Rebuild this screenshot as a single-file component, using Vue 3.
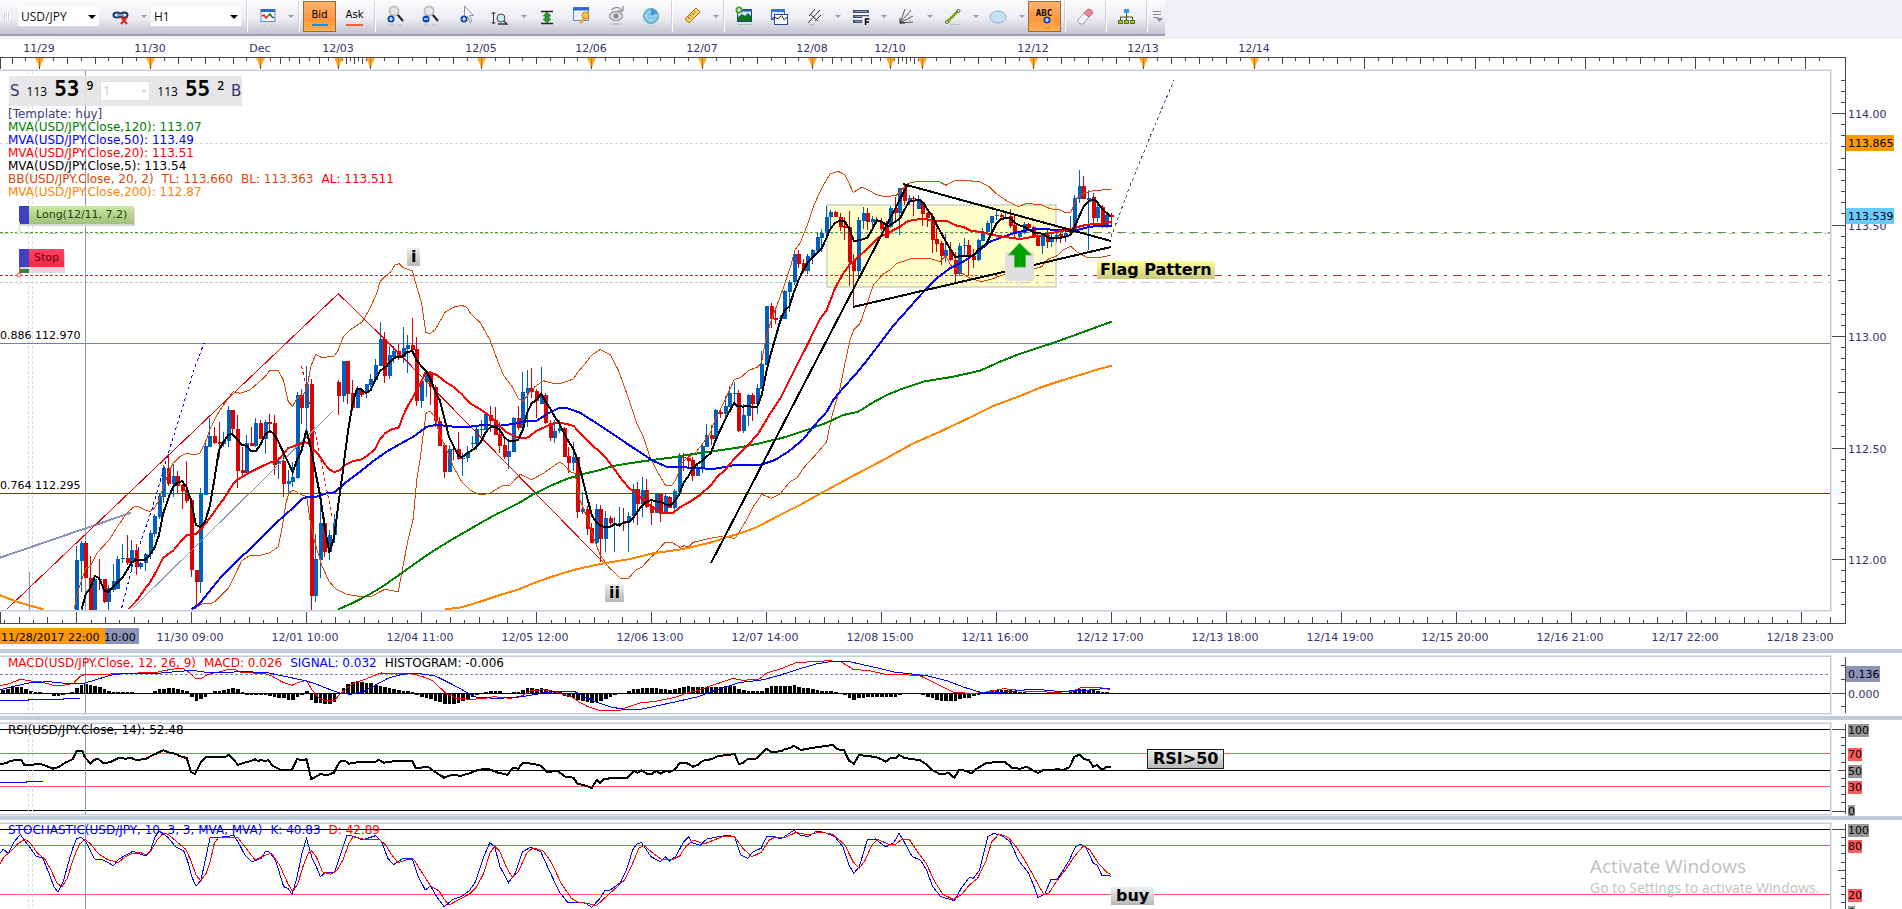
<template>
  <div class="station">
    <header class="topbar">
      <div class="toolbar">
        <span class="grip"></span>
        <label class="picker symbol">
          <select v-model="symbol" aria-label="Symbol">
            <option>USD/JPY</option>
            <option>EUR/USD</option>
          </select>
          <span class="arrow"></span>
        </label>
        <button class="tool" aria-label="Link charts"><svg class="icon" v-html="icons.link"></svg></button>
        <button class="caret" aria-label="Link options"></button>
        <label class="picker period">
          <select v-model="period" aria-label="Period">
            <option>H1</option>
            <option>H4</option>
          </select>
          <span class="arrow"></span>
        </label>
        <span class="sep"></span>
        <button class="tool" aria-label="Indicators"><svg class="icon" v-html="icons.chart"></svg></button>
        <button class="caret" aria-label="Indicator options"></button>
        <span class="sep"></span>
        <button class="tool side" :class="{ active: side === 'Bid' }" @click="side = 'Bid'"><span class="word bid">Bid</span></button>
        <button class="tool side" :class="{ active: side === 'Ask' }" @click="side = 'Ask'"><span class="word ask">Ask</span></button>
        <span class="sep"></span>
        <template v-for="t in tools" :key="t.name">
          <button class="tool" :class="{ active: t.active }" :aria-label="t.name"><svg class="icon" v-html="icons[t.icon]"></svg></button>
          <button v-if="t.menu" class="caret" :aria-label="t.name + ' options'"></button>
          <span v-if="t.sep" class="sep"></span>
        </template>
        <button class="more" aria-label="More tools">
          <svg width="10" height="12" viewBox="0 0 10 12">
            <path d="M0 .5h8M0 3.5h8M0 6.5h5" stroke="#8a8aa0" />
            <path d="M3 7h7l-3.500 4z" fill="#8a8aa0" />
          </svg>
        </button>
      </div>
    </header>

    <main class="main-pane">
      <svg class="top-axis" height="31">
        <line class="axis" x1="0" y1="18.500" x2="100%" y2="18.500" />
        <path class="axis" :d="topTicks" />
        <g v-for="d in dates" :key="d.x">
          <path v-if="d.mark" :d="`M${d.x - 4} 19h9l-2 4-2 6h-1l-2-6z`" fill="#ffa928" />
          <line class="axis" :x1="d.x + 0.5" y1="27" :x2="d.x + 0.5" y2="31" />
          <line v-if="d.mark" :x1="d.x + 0.5" y1="19" :x2="d.x + 0.5" y2="27" stroke="#d08010" />
          <line v-else class="axis" :x1="d.x + 0.5" y1="18" :x2="d.x + 0.5" y2="27" />
          <text class="axis-label" :x="d.x" y="13" text-anchor="middle">{{ d.label }}</text>
        </g>
      </svg>

      <div class="plot">
        <svg class="canvas" height="539">
          <rect x="827" y="134" width="229" height="82" fill="#ffffcc" stroke="#b8b8b8" />
          <g class="crisp thin">
            <path d="M28.500 0V539M32.500 0V539" stroke="#dcdcdc" stroke-dasharray="3 2" />
            <path d="M29.500 501V539" stroke="#8c94b8" />
            <line x1="0" y1="72.500" x2="100%" y2="72.500" stroke="#d8d8d8" stroke-dasharray="3 2" />
            <line x1="0" y1="162.500" x2="100%" y2="162.500" stroke="#c8c8c8" stroke-dasharray="9 6 3 6" />
            <line x1="0" y1="161.500" x2="1020" y2="161.500" stroke="#5f9a35" stroke-dasharray="3 2" />
            <line x1="1021" y1="161.500" x2="100%" y2="161.500" stroke="#5f9a35" stroke-dasharray="9 6 3 6" />
            <line x1="0" y1="204.500" x2="1020" y2="204.500" stroke="#b83030" stroke-dasharray="3 2" />
            <line x1="1021" y1="204.500" x2="100%" y2="204.500" stroke="#b83030" stroke-dasharray="9 6 3 6" />
            <line x1="0" y1="211.500" x2="1020" y2="211.500" stroke="#c4c4c4" stroke-dasharray="3 2" />
            <line x1="1021" y1="211.500" x2="100%" y2="211.500" stroke="#c4c4c4" stroke-dasharray="9 6 3 6" />
            <line x1="0" y1="272.500" x2="100%" y2="272.500" stroke="#7878c8" />
            <line x1="0" y1="422.500" x2="100%" y2="422.500" stroke="#f00000" />
            <path d="M85.500 0V539" stroke="#8c94b8" />
          </g>

          <g class="crisp thin">
            <path :d="wicks.up" stroke="#0060c0" />
            <path :d="wicks.down" stroke="#dc0000" />
          </g>
          <g class="crisp">
            <path :d="bodies.up" fill="#0060c0" />
            <path :d="bodies.down" fill="#dc0000" />
          </g>

          <g class="crisp curve">
            <polyline v-for="(c, i) in mainCurves" :key="i" :points="c.points" :stroke="c.color" :stroke-width="c.width" :stroke-dasharray="c.dash" />
          </g>

          <text class="level" x="0" y="268">0.886 112.970</text>
          <text class="level" x="0" y="418">0.764 112.295</text>

          <rect x="1005" y="181" width="29" height="29" rx="2" fill="#e0e0e0" />
          <path d="M1019.500 172l12 12h-6v12h-11v-12h-6z" fill="#00a000" stroke="#50b850" />
          <circle cx="1019" cy="212" r="1.500" fill="#fff" stroke="#ddd" />
        </svg>

        <div class="quote">
          <button class="deal" @click="order = 'sell'">
            <span class="deal-side">S</span><span class="small">113</span><span class="big">53</span><span class="pip">9</span>
          </button>
          <label class="lots">
            <select v-model="lots" aria-label="Lots"><option>1</option><option>2</option></select>
            <span class="arrow"></span>
          </label>
          <button class="deal" @click="order = 'buy'">
            <span class="small">113</span><span class="big">55</span><span class="pip">2</span><span class="deal-side">B</span>
          </button>
        </div>

        <ul class="legend main-legend">
          <li v-for="(row, i) in legend" :key="i">
            <span v-for="part in row" :key="part.text" :class="part.tone">{{ part.text }}</span>
          </li>
        </ul>

        <div class="position long"><i></i><span>Long(12/11, 7.2)</span></div>
        <div class="position stop-shadow"><i></i></div>
        <div class="position stop"><i></i><span>Stop</span></div>
        <svg class="pins" width="10" height="64">
          <path d="M5.500 0V9" stroke="#c4e49c" />
          <circle cx="5" cy="10" r="2" fill="#fff" stroke="#c4e49c" />
          <path d="M5.500 46V50" stroke="#ff4058" />
          <circle cx="5" cy="53" r="2" fill="#fff" stroke="#ff4058" />
          <circle cx="5" cy="60" r="2" fill="#fff" stroke="#e0e0e0" />
        </svg>

        <span class="note wave-one">i</span>
        <span class="note wave-two">ii</span>
        <span class="note flag">Flag Pattern</span>
      </div>

      <svg class="bottom-axis" height="38">
        <line class="axis" x1="0" y1="12.500" x2="100%" y2="12.500" />
        <path class="axis" :d="bottomTicks" />
        <text v-for="t in times" :key="t.x" class="axis-label" :x="t.x" y="30" text-anchor="middle">{{ t.label }}</text>
        <rect x="0" y="17" width="105" height="16" fill="#ff9900" />
        <rect x="105" y="17" width="34" height="16" fill="#8c94b8" />
        <text class="level" x="1" y="30">11/28/2017 22:00</text>
        <text class="level" x="104" y="30">10:00</text>
      </svg>

      <svg class="scale" width="71" height="610">
        <path class="axis" d="M0 18.500H14.500V584.500H0" />
        <path class="axis" :d="priceTicks" />
        <text v-for="p in prices" :key="p.y" class="axis-label" x="17" :y="p.y + 4">{{ p.label }}</text>
        <rect x="15" y="96" width="48" height="16" fill="#ff9900" />
        <text class="level" x="17" y="108">113.865</text>
        <rect x="15" y="169" width="48" height="16" fill="#66ccff" />
        <text class="level" x="17" y="181">113.539</text>
      </svg>
    </main>

    <section class="sub-pane macd">
      <div class="plot">
        <svg class="canvas" height="56">
          <g class="crisp thin">
            <line x1="0" y1="17.500" x2="100%" y2="17.500" stroke="#7c86b0" stroke-dasharray="3 2" />
            <path :d="histogram" fill="#000" />
            <line x1="0" y1="36.500" x2="100%" y2="36.500" stroke="#000" />
            <path d="M28.500 0V56M32.500 0V56" stroke="#dcdcdc" stroke-dasharray="3 2" />
            <path d="M0 43.500H28V42.500H63V41.500H80" fill="none" stroke="#0000ff" />
            <path d="M85.500 0V56" stroke="#8c94b8" />
          </g>
          <g class="crisp curve">
            <polyline :points="macd.line" stroke="#ff0000" />
            <polyline :points="macd.signal" stroke="#0000ff" />
          </g>
        </svg>
        <p class="legend">
          <span class="red">MACD(USD/JPY.Close, 12, 26, 9)</span><span class="red">MACD: 0.026</span>
          <span class="blue">SIGNAL: 0.032</span><span class="black">HISTOGRAM: -0.006</span>
        </p>
      </div>
      <svg class="scale" width="71" height="63">
        <path class="axis" d="M14.500 4V60M10 12.500H14M10 26.500H14M0 40.500H14M10 53.500H14" />
        <rect x="15" y="13" width="34" height="16" fill="#8c94b8" />
        <text class="level" x="17" y="25">0.136</text>
        <text class="axis-label" x="17" y="45">0.000</text>
      </svg>
    </section>

    <section class="sub-pane rsi">
      <div class="plot">
        <svg class="canvas" height="90">
          <g class="crisp thin">
            <line v-for="l in rsiLevels" :key="l.value" x1="0" :y1="l.y - 3.5" x2="100%" :y2="l.y - 3.5" :stroke="l.line" />
            <path d="M28.500 0V90M32.500 0V90" stroke="#dcdcdc" stroke-dasharray="3 2" />
            <path d="M0 58.500H26V57.500H43" fill="none" stroke="#0000ff" />
            <path d="M85.500 0V90" stroke="#8c94b8" />
          </g>
          <polyline class="crisp curve" :points="rsi" stroke="#000" stroke-width="2" />
        </svg>
        <p class="legend"><span class="black">RSI(USD/JPY.Close, 14): 52.48</span></p>
        <span class="note rsi-note">RSI&gt;50</span>
      </div>
      <svg class="scale" width="71" height="96">
        <path class="axis" :d="levelTicks(9)" />
        <g v-for="l in rsiLevels" :key="l.value">
          <rect x="17" :y="l.y - 5" :width="7 * l.value.length" height="13" :fill="l.box" />
          <text class="level" x="17" :y="l.y + 5">{{ l.value }}</text>
        </g>
      </svg>
    </section>

    <section class="sub-pane stochastic">
      <div class="plot">
        <svg class="canvas" height="90">
          <g class="crisp thin">
            <line v-for="l in stochLevels" :key="l.value" x1="0" :y1="l.y - 3.5" x2="100%" :y2="l.y - 3.5" :stroke="l.line" />
            <path d="M28.500 0V90M32.500 0V90" stroke="#dcdcdc" stroke-dasharray="3 2" />
            <path d="M85.500 0V90" stroke="#8c94b8" />
          </g>
          <g class="crisp curve">
            <polyline :points="stoch.k" stroke="#0000ff" />
            <polyline :points="stoch.d" stroke="#ff0000" />
          </g>
        </svg>
        <p class="legend">
          <span class="blue">STOCHASTIC(USD/JPY, 10, 3, 3, MVA, MVA)</span><span class="blue">K: 40.83</span><span class="red">D: 42.89</span>
        </p>
        <span class="note buy-note">buy</span>
      </div>
      <svg class="scale" width="71" height="96">
        <path class="axis" :d="levelTicks(9)" />
        <g v-for="l in stochLevels" :key="l.value">
          <rect x="17" :y="l.y - 5" :width="7 * l.value.length" height="13" :fill="l.box" />
          <text class="level" x="17" :y="l.y + 5">{{ l.value }}</text>
        </g>
      </svg>
    </section>

    <aside class="watermark">
      <strong>Activate Windows</strong>
      <span>Go to Settings to activate Windows.</span>
    </aside>
  </div>
</template>

<script setup>
import { ref } from 'vue'

const symbol = ref('USD/JPY')
const period = ref('H1')
const side = ref('Bid')
const lots = ref('1')
const order = ref('')

const plus = (x, y) => `<circle cx="${x}" cy="${y}" r="3.500" fill="#0a48b0"/><path d="M${x - 2} ${y}h4M${x} ${y - 2}v4" stroke="#fff" stroke-width="1.200"/>`
const lens = '<path d="M14 13l6 7" stroke="#222" stroke-width="2"/><circle cx="11" cy="10" r="4.500" fill="#e8e8e8" stroke="#c0c0c0" stroke-width="2"/>'

const icons = {
  link: '<g fill="none" stroke="#1c3a68" stroke-width="2"><ellipse cx="9" cy="14" rx="3.500" ry="2.500"/><ellipse cx="16" cy="14" rx="3.500" ry="2.500"/><path d="M9 14h7" stroke="#7aa0d0"/></g><path d="M13 16l6 7M19 16l-6 7" stroke="#e82010" stroke-width="2"/>',
  chart: '<rect x="6" y="8.500" width="14" height="12" fill="#fff" stroke="#5a86cc"/><path d="M6 9.500h14" stroke="#2c68d0" stroke-width="3"/><path d="M7 15l2-1 2 3 2-2" fill="none" stroke="#e02020" stroke-width="1.500"/><path d="M13 15l2-2 2 3 2 1" fill="none" stroke="#107020" stroke-width="1.500"/><path d="M7 24h3M15 24h3" stroke="#e8b8b8"/>',
  zoomIn: lens + plus(8, 18) + '<path d="M6 24h5M14 24h5" stroke="#b8b8cc"/>',
  zoomOut: lens + '<circle cx="8" cy="18" r="3.500" fill="#0a48b0"/><path d="M6 18h4" stroke="#fff" stroke-width="1.200"/><path d="M6 24h5M14 24h5" stroke="#b8b8cc"/>',
  pointer: '<path d="M11.500 5v13l3-2.500 2.500 6 2-1-2.500-6h4z" fill="#f4f4f4" stroke="#909098"/>' + plus(11, 18),
  zoomAxis: '<path d="M5.500 11v12M3.500 13l2-2 2 2M3.500 21l2 2 2-2" fill="none" stroke="#333"/><circle cx="13" cy="17" r="4" fill="#c8f0f8" stroke="#444"/><path d="M16 20l3 3h-9" fill="none" stroke="#333" stroke-width="1.300"/>',
  fit: '<path d="M7 10.500h12M7 22.500h12" stroke="#222" stroke-width="1.500"/><path d="M13 11l4 4h-2v3h2l-4 4-4-4h2v-3H9z" fill="#20a020" stroke="#105010" stroke-width=".500"/>',
  windowKey: '<rect x="4.500" y="6.500" width="15" height="13" fill="#e8f2fc" stroke="#5a86cc"/><path d="M4 8h16" stroke="#2c68d0" stroke-width="3"/><path d="M14 17l-4 4 2 2 5-5" fill="#e8a820"/><circle cx="16.500" cy="14.500" r="3.500" fill="#f8c040" stroke="#c88818"/>',
  eye: '<ellipse cx="12" cy="15" rx="6.500" ry="4.500" fill="#e0e0e4" stroke="#a0a0a8" stroke-width="1.500"/><circle cx="12" cy="15" r="2.500" fill="#888890"/><path d="M7 9q6-5 11 0M19 5v5h-5" fill="none" stroke="#707078"/><path d="M7 23h10" stroke="#c4c4d0" stroke-width="2"/>',
  radar: '<circle cx="12" cy="15" r="7.500" fill="#7cc0e4" stroke="#58a0c8"/><circle cx="12" cy="15" r="4.500" fill="none" stroke="#b8e0f4"/><path d="M12 15V8a7 7 0 0 1 6.500 4z" fill="#4898d0"/><path d="M5 15h14M12 15v7" stroke="#a8d8f0"/><path d="M8 25h8" stroke="#b8cce0"/>',
  ruler: '<path d="M5 18L16 7l4 4L9 22z" fill="#f4cc68" stroke="#a87418"/><path d="M8 16l2 2M10 14l1.500 1.500M12 12l2 2M14 10l1.500 1.500" stroke="#805010"/>',
  picture: '<rect x="5.500" y="8.500" width="14" height="12" fill="#c8e4f8" stroke="#184878"/><path d="M6 20v-4l4-3 3 2 3-3 3 3v5z" fill="#107818"/><path d="M5 9.500h15" stroke="#2058a8" stroke-width="2"/><circle cx="7" cy="9" r="3.500" fill="#48a030"/><path d="M5 9h4M7 7v4" stroke="#fff"/><path d="M6 23.500h14" stroke="#a8c0b0"/>',
  windows: '<rect x="4.500" y="8.500" width="13" height="10" fill="#dce8f8" stroke="#3468c0"/><path d="M4 9.500h14" stroke="#3c74d0" stroke-width="3"/><rect x="7.500" y="13.500" width="13" height="10" fill="#fff" stroke="#244c90"/><path d="M5 18q2-3 4-1t4-1 3 1 4-1" fill="none" stroke="#222"/>',
  pitchfork: '<path d="M6 22L18 9M7 15L13 8M13 20l6-6M8 13l8 7" fill="none" stroke="#333"/><path d="M8 24l4-1" stroke="#aaa"/>',
  fib: '<path d="M5 10.500h16M5 15.500h16M5 20.500h11" stroke="#40506c" stroke-width="3"/><path d="M7 10.500h12M7 15.500h12M7 20.500h8" stroke="#8c9cb8"/><path d="M16 23.500v-6.500h5M16 20h4" fill="none" stroke="#fff" stroke-width="3"/><path d="M17.500 24v-6h4M17 21h4" fill="none" stroke="#000" stroke-width="1.500"/>',
  fan: '<path d="M6 22L11 8M6 22L17 9M6 22l13-7M6 22l13-1" stroke="#555"/><path d="M6 17v5h5" fill="none" stroke="#333"/>',
  line: '<path d="M7 21L18 10" stroke="#78a810" stroke-width="2.500"/><circle cx="7" cy="21" r="1.500" fill="#fff" stroke="#506010"/><circle cx="18.500" cy="10" r="1.500" fill="#fff" stroke="#506010"/><path d="M10 23.500h10" stroke="#c0c0c8"/>',
  ellipse: '<ellipse cx="12" cy="16" rx="8" ry="6" fill="#c8dff4" stroke="#90b4d8"/>',
  text: '<text x="12" y="15" font-size="9" font-weight="bold" text-anchor="middle" font-family="DejaVu Sans Mono, monospace">ABC</text>' + plus(15, 19) + '<path d="M12 27h6" stroke="#e08820"/>',
  eraser: '<path d="M5 19l6-7 5 4-6 7q-2 .500-4-1t-1-3z" fill="#f4f4f4" stroke="#a0a0a8"/><path d="M11 12l4-4q4 0 5 4l-4 4z" fill="#e88894" stroke="#c86878"/>',
  tree: '<path d="M12.500 11v5M6.500 20v-4h12v4M12.500 16v4" fill="none" stroke="#405010"/><rect x="10" y="8" width="5" height="4" fill="#3898f0"/><g fill="#a8cc28" stroke="#507010"><rect x="4.500" y="19.500" width="4" height="3"/><rect x="10.500" y="19.500" width="4" height="3"/><rect x="16.500" y="19.500" width="4" height="3"/></g>',
}

const tools = [
  { name: 'Zoom in', icon: 'zoomIn' },
  { name: 'Zoom out', icon: 'zoomOut' },
  { name: 'Pointer', icon: 'pointer' },
  { name: 'Zoom axis', icon: 'zoomAxis', menu: true },
  { name: 'Fit height', icon: 'fit' },
  { name: 'Chart properties', icon: 'windowKey' },
  { name: 'Show or hide', icon: 'eye' },
  { name: 'Market scan', icon: 'radar', sep: true },
  { name: 'Ruler', icon: 'ruler', menu: true, sep: true },
  { name: 'Add picture', icon: 'picture' },
  { name: 'Overlay chart', icon: 'windows' },
  { name: 'Pitchfork', icon: 'pitchfork', menu: true },
  { name: 'Fibonacci', icon: 'fib', menu: true },
  { name: 'Fan', icon: 'fan', menu: true },
  { name: 'Line', icon: 'line', menu: true },
  { name: 'Shape', icon: 'ellipse', menu: true },
  { name: 'Text label', icon: 'text', active: true, sep: true },
  { name: 'Eraser', icon: 'eraser', sep: true },
  { name: 'Objects', icon: 'tree', sep: true },
]

const legend = [
  [{ text: '[Template: huy]', tone: 'navy' }],
  [{ text: 'MVA(USD/JPY.Close,120): 113.07', tone: 'green' }],
  [{ text: 'MVA(USD/JPY.Close,50): 113.49', tone: 'blue' }],
  [{ text: 'MVA(USD/JPY.Close,20): 113.51', tone: 'red' }],
  [{ text: 'MVA(USD/JPY.Close,5): 113.54', tone: 'black' }],
  [
    { text: 'BB(USD/JPY.Close, 20, 2)', tone: 'rust' },
    { text: 'TL: 113.660', tone: 'rust' },
    { text: 'BL: 113.363', tone: 'rust' },
    { text: 'AL: 113.511', tone: 'red' },
  ],
  [{ text: 'MVA(USD/JPY.Close,200): 112.87', tone: 'orange' }],
]

// top axis: one entry per trading day
const dates = [
  [39, '11/29'], [150, '11/30'], [260, 'Dec'], [338, '12/03'], [370, ''], [481, '12/05'], [591, '12/06'],
  [702, '12/07'], [812, '12/08'], [890, '12/10'], [922, ''], [1033, '12/12'], [1143, '12/13'], [1254, '12/14'],
  [1364, ''], [1475, ''], [1585, ''], [1695, ''], [1805, ''],
].map(([x, label]) => ({ x, label, mark: x < 1300 }))

const topTicks = (() => {
  let d = 'M.5 18V30'
  const xs = [-71, ...dates.map((t) => t.x), 1915]
  for (let i = 0; i < xs.length - 1; i++) {
    for (let j = 1; j < 8; j++) {
      const x = Math.round(xs[i] + ((xs[i + 1] - xs[i]) * j) / 8)
      if (x > 0 && x < 1833) d += `M${x + 0.5} 19V${j % 2 ? 22 : 25}`
    }
  }
  return d
})()

const times = ['11/30 09:00', '12/01 10:00', '12/04 11:00', '12/05 12:00', '12/06 13:00', '12/07 14:00', '12/08 15:00',
  '12/11 16:00', '12/12 17:00', '12/13 18:00', '12/14 19:00', '12/15 20:00', '12/16 21:00', '12/17 22:00', '12/18 23:00',
].map((label, i) => ({ label, x: 190 + i * 115 }))

const bottomTicks = (() => {
  let d = 'M.5 0V12'
  for (let i = -5; i < 123; i++) {
    const x = Math.round(76.2 + (i * 115) / 8)
    if (x < 1 || x > 1830) continue
    const top = i % 8 === 0 ? 0 : i % 2 ? 9 : 6
    d += `M${x + 0.5} ${top}V12`
  }
  return d
})()

const prices = ['114.00', '113.50', '113.00', '112.50', '112.00'].map((label, i) => ({ label, y: 75 + Math.round(i * 111.5) }))
const priceTicks = (() => {
  let d = ''
  for (let i = -3; i < 45; i++) {
    const y = Math.round(74 + i * 11.15)
    d += `M${i % 10 === 0 ? 0 : i % 5 === 0 ? 7 : 10} ${y + 0.5}H14`
  }
  return d
})()

const levels = (top, unit, list) => list.map(([value, kind]) => ({
  value,
  y: Math.round(top + (100 - value) * unit),
  line: kind === 'red' ? '#ff5a5a' : '#000',
  box: kind === 'red' ? '#ff5a5a' : '#969696',
}))
const rsiLevels = levels(9, 0.81, [['100'], ['70', 'red'], ['50'], ['30', 'red'], ['0']])
const stochLevels = levels(9, 0.815, [['100'], ['80', 'red'], ['20', 'red'], ['0']])
const levelTicks = (top) => {
  let d = 'M14.5 4V94'
  for (let i = 0; i <= 10; i++) {
    d += `M${i % 10 === 0 ? 0 : i === 5 ? 7 : 10} ${Math.round(top + i * 8.15) + 0.5}H14`
  }
  return d
}

// Bars: direction, high, body top, body bottom, low. Three units to the pixel, each
// block with its own offset from the top of the plot.
const barBlocks = [
  { first: 0, top: 259, bars: `
    u 648 690 840 840|u 633 639 692 785|d 633 639 745 745|d 678 744 840 840|u 735 747 840 840|d 688 747 750 780
    d 747 747 816 818|u 765 775 816 840|u 703 752 781 785|u 678 687 776 776|u 642 684 687 700|d 616 684 698 705
    u 630 660 698 720|d 642 660 711 735|u 697 700 711 716|u 670 673 700 722|u 600 609 673 686|u 552 558 612 620
    u 490 498 560 566|u 405 414 500 520|d 372 414 461 467|u 402 437 461 500|d 424 438 468 490|d 462 465 483 537
    d 393 480 512 519|d 505 510 720 740|d 720 720 756 830|u 475 490 756 788|u 340 348 495 495|u 264 318 351 351
    d 290 318 339 342|d 275 337 342 380|u 305 333 342 350|u 228 240 333 350|d 240 240 297 310|d 255 297 423 474
    d 350 420 429 444|u 315 340 430 433|d 290 340 347 348|u 264 279 348 350|d 270 279 326 328|u 270 277 326 372
    d 253 276 282 308|d 255 279 405 435|u 380 392 402 447|d 360 393 461 500|u 420 453 461 490|u 396 441 456 470
    u 186 195 443 446|d 177 195 234 282|u 108 162 234 310|d 147 162 797 840|u 612 687 797 817|u 505 579 690 744
    d 560 580 666 680|u 600 615 666 690|u 552 579 615 640|d 150 156 198 255|u 93 93 198 215|d 93 93 192 222
    d 150 189 234 243|u 168 180 234 234|d 175 180 195 202|u 162 162 190 203|u 133 148 166 172|u 87 104 150 150
    u -24 27 108 108|d 6 27 138 158|u 47 75 138 147|u 47 63 80 100|d 42 63 84 90|u -9 54 80 100
    u 15 45 57 128|d -36 45 60 65|d 20 57 213 228|u 150 153 213 234|u 120 126 156 200|d 126 126 172 224
    d 165 170 274 291|d 261 274 348 349|d 340 345 426 444|u 345 357 426 426|d 345 357 360 390|d 306 357 388 390
    u 370 384 388 437|u 348 366 384 396|u 318 339 343 353|u 292 297 341 360` },
  { first: 88, top: 169, bars: `
    u 540 567 570 588|u 515 522 570 570|d 498 524 543 575|d 501 540 585 586|d 545 582 618 639|d 588 615 650 658
    u 600 633 651 686|u 531 534 635 636|d 498 534 564 570|u 395 456 564 566|u 390 444 460 560|d 384 444 456 474
    d 448 453 482 535|u 381 466 492 492|d 460 465 550 552|d 540 550 594 603|u 540 573 594 608|u 540 564 573 580
    d 560 564 650 651|d 620 648 668 699|u 606 651 668 693|d 651 651 815 834|u 756 807 815 822|d 798 807 867 884
    d 850 864 909 910|u 792 807 909 912|d 795 807 896 966|u 813 834 896 935|d 828 834 850 862|u 830 850 856 935
    u 801 848 856 860|d 804 848 852 872|u 816 828 846 935|u 732 747 829 850|d 726 747 792 854|u 711 750 792 830
    d 717 750 800 803|d 780 798 818 854|u 758 762 818 820|d 758 762 823 846|u 763 768 823 823|d 767 770 803 805
    u 748 753 803 814|u 638 651 756 757|d 640 651 654 693|d 645 655 662 682|d 650 660 708 722|u 675 680 708 708
    u 615 618 680 699|u 552 585 620 620|d 555 585 597 615|u 507 510 597 600|d 510 515 523 535|u 468 498 521 535
    u 438 459 500 500|u 426 459 462 492|d 450 459 573 575|u 492 525 573 578|u 462 465 527 558|d 459 465 492 543
    u 432 444 492 522|u 333 372 446 447|u 198 198 375 376|d 189 198 236 264|d 210 234 239 252|u 225 233 238 240
    u 150 153 237 237|u 120 126 156 216|u 36 42 126 135|d 30 42 71 84` },
  { first: 158, top: 79, bars: `
    d 326 339 363 370|u 312 318 363 372|u 298 300 320 343|u 249 261 302 303|u 237 249 263 306|u 168 201 249 270
    u 180 186 201 237|d 183 186 201 202|d 189 201 231 243|d 201 229 233 270|d 183 231 336 408|d 312 333 363 470
    u 201 210 363 380|u 171 189 212 237|d 174 189 215 240|u 198 207 216 240|d 201 210 215 222|d 205 215 236 244
    d 213 230 263 265|u 168 174 232 234|d 141 174 189 220|u 113 114 188 255|d 99 114 153 164|u 135 144 152 165
    d 138 145 148 198|u 135 148 177 177|d 153 156 192 228|d 186 190 205 230|d 190 200 270 308|d 234 267 282 305
    d 273 279 318 345|u 252 300 318 335|d 276 300 330 333|d 306 330 372 396|u 280 288 372 378|u 264 285 289 318
    d 270 285 321 378|d 298 318 330 354|u 267 270 330 333|u 235 246 272 272|u 213 219 246 256|u 197 198 219 243
    u 177 195 198 210|d 190 195 202 207|u 189 201 205 207|d 177 198 228 234|d 192 225 252 260|u 243 249 261 266
    u 216 222 249 252|d 219 222 234 240|d 228 232 258 262|d 250 255 287 288|u 256 258 287 312|d 240 255 275 294
    u 250 261 275 292|u 240 255 261 276|d 240 253 257 279|u 235 248 260 276|u 198 240 250 252|u 135 144 240 240
    u 60 108 147 160|d 78 108 147 148|u 120 144 150 300|d 129 141 204 222|u 153 171 204 216|d 165 171 231 234
    u 190 195 231 233|d 190 195 200 230` },
]

const barX = (k) => Math.round(76 + k * 4.6)
const wicks = { up: '', down: '' }
const bodies = { up: '', down: '' }
for (const block of barBlocks) {
  block.bars.trim().split(/\||\n/).forEach((bar, i) => {
    const [dir, ...v] = bar.trim().split(' ')
    const [high, open, close, low] = v.map((n) => Math.round(n / 3) + block.top)
    const x = barX(block.first + i)
    const key = dir === 'u' ? 'up' : 'down'
    wicks[key] += `M${x + 0.5} ${high}V${low}`
    bodies[key] += `M${x - 1} ${open}h4v${Math.max(1, close - open)}h-4z`
  })
}

// joins curve pieces [left, top, points] into one polyline; sx and 3 are units per pixel
const join = (sx, ...pieces) => pieces.map(([left, top, pts]) => pts.trim().split(/\s+/).map((p) => {
  const [x, y] = p.split(',').map(Number)
  return `${(left + x / sx).toFixed(1)},${(top + y / 3).toFixed(1)}`
}).join(' ')).join(' ')
const a = (pts) => [0, 259, pts]
const top = (pts) => [0, -11, pts]
const b = (pts) => [400, 169, pts]
const c = (pts) => [740, 79, pts]

const mainCurves = [
  { color: '#8c94b8', width: 2, points: join(3, a('0,683 393,548')) },
  { color: '#8c94b8', width: 1, points: join(3, a('400,833 998,244')) },
  { color: '#e00000', width: 1, points: join(3, a('20,838 900,0'), top('1015,701 1185,868'), b('612,970')) },
  { color: '#0000ff', width: 1, dash: '3 3', points: join(3, a('365,833 400,700 455,540 505,370 545,240 585,110 613,38')) },
  { color: '#f00000', width: 1, dash: '3 3', points: join(3, a('905,108 950,330 998,568')) },
  { color: '#505088', width: 1, dash: '3 3', points: '1111,166 1130,115 1150,66 1174,9' },
  // Bollinger bands
  { color: '#d84808', width: 1, points: join(3,
    a('222,838 235,780 257,715 270,710 290,670 330,627 352,590 380,550 400,532 412,528 430,538 450,545 463,535 477,510 490,470 505,430 519,400 540,380 560,370 580,374 600,370 615,340 629,300 643,270 660,240 685,205 699,185 720,190 750,180 767,165 795,140 810,121 835,122 850,150 865,215 878,228 891,205 905,200 920,180 932,110 947,73 965,83 1003,78 1015,60'),
    top('1030,830 1050,810 1087,785 1110,745 1130,700 1140,665 1160,645 1172,635 1185,615 1197,611 1210,623 1237,632 1250,680 1265,730 1277,817 1290,821 1305,810 1325,775 1335,757 1360,742 1385,736 1400,742 1415,765 1440,787'),
    b('270,300 290,355 310,405 340,445 355,475 370,485 385,462 405,440 430,422 460,430 480,431 520,417 535,395 560,365 575,345 600,329 630,343 655,390 680,460 710,550 730,590 750,650 775,700 797,737 815,737 830,715 845,670 860,655 885,640 905,615 930,580 945,540 960,510 975,480 1002,420 1025,410 1045,392 1075,380 1085,365 1095,310 1115,235 1135,185 1155,130 1170,85 1185,30'),
    c('180,280 200,230 220,170 245,115 270,72 295,64 315,75 340,127 367,111 385,120 405,132 435,141 470,135 490,115 505,100 535,94 595,94 618,106 645,91 715,94 745,108 770,132 800,152 835,170 860,160 905,165 930,176 960,180 975,187 992,187 1000,170 1015,140 1035,128 1060,122 1113,118')) },
  { color: '#d84808', width: 1, points: join(3,
    a('585,835 605,822 630,821 645,815 660,800 685,775 700,745 725,693 750,676 770,678 810,668 835,650 845,600 858,520 866,490 880,480 905,495 920,500 930,570 945,640 965,705 985,750 1005,775 1040,793 1085,800 1115,798 1155,778 1195,785 1205,730 1222,640 1240,565 1250,450 1260,390 1270,310 1278,250 1290,243 1305,262 1318,310 1340,360 1360,410 1385,455 1410,480'),
    b('240,765 270,760 290,747 312,735 330,735 360,703 395,719 430,700 477,667 490,672 510,695 525,700 540,780 560,830 580,890 600,945 625,980 660,1014 685,1016 705,992 725,982 750,955 770,935 795,907 815,907 840,922 853,917 865,922 880,907 930,895 960,890 1005,895'),
    c('20,1110 40,1070 65,1033 95,1045 120,1032 150,995 172,983 190,955 235,905 260,875 275,800 300,715 315,640 330,570 341,540 360,520 385,450 400,405 430,372 450,360 470,340 515,325 570,325 600,335 617,318 635,350 660,365 690,385 725,395 755,387 795,373 880,357 905,350 925,327 950,318 970,300 992,289 1010,305 1040,322 1080,322 1113,316')) },
  // 200 bars
  { color: '#ff8400', width: 2, points: join(3, a('0,796 60,818 130,838')) },
  { color: '#ff8400', width: 2, points: join(3,
    b('135,1108 185,1102 240,1085 300,1065 350,1050 400,1030 450,1012 520,990 600,972 690,957 760,940 850,927 930,908 1000,886'),
    c('0,1150 50,1132 110,1100 180,1065 250,1026 340,977 430,930 520,880 600,845 680,807 760,768 840,738 900,713 960,693 1020,675 1080,656 1115,647')) },
  // 120 bars
  { color: '#008000', width: 2, points: join(3,
    a('1015,838 1060,818 1110,792 1150,768 1200,733 1260,690 1300,663 1350,632 1400,603 1440,580'),
    b('290,822 350,793 400,763 450,738 500,717 550,702 600,690 640,678 700,668 750,661 820,652 880,642 950,632 1020,622'),
    c('60,880 140,860 200,840 260,818 310,795 355,785 400,757 440,735 490,715 550,695 640,680 720,662 780,635 830,615 880,598 930,582 1000,557 1060,535 1115,515')) },
  // 50 bars
  { color: '#0000ff', width: 2, points: join(3,
    a('575,838 600,820 625,788 660,745 700,705 730,675 755,653 795,612 835,573 875,537 905,507 920,501 950,500 980,490 1003,487 1040,455 1080,425 1120,393 1160,365 1200,342'),
    b('40,590 80,560 110,554 160,560 210,560 250,555 290,558 340,552 380,543 410,542 440,523 475,505 500,504 540,518 590,550 640,583 690,617 730,643 760,663 800,680 850,682 940,687 985,679 1005,675'),
    c('60,945 105,930 145,905 190,868 220,830 260,785 280,750 310,713 345,675 380,632 420,580 460,527 500,482 530,448 560,415 590,385 630,355 670,335 710,308 750,275 790,260 820,250 860,241 900,236 950,240 1000,243 1050,230 1080,228 1115,228')) },
  // 20 bars
  { color: '#ff0000', width: 2, points: join(3,
    a('385,838 410,812 436,775 450,757 463,735 477,708 490,683 519,662 546,630 560,616 588,613 601,600 629,565 657,525 671,507 685,485 699,463 712,450 740,432 767,418 809,398 836,388 850,372 864,355 891,345 915,337 925,340 940,357 960,380 974,402 988,418 1003,427 1020,420 1035,405 1060,393 1085,388 1105,375 1125,357 1140,328 1155,310 1175,298 1196,293 1208,260 1222,230 1237,205 1250,180 1262,160 1275,130 1290,127 1310,135 1340,158 1360,170 1385,192 1410,220 1440,237'),
    b('262,522 280,538 300,560 320,577 345,590 370,595 385,592 410,572 430,563 455,552 475,547 500,552 521,558 540,580 575,615 600,635 620,657 645,690 665,718 685,742 710,762 735,785 760,803 785,820 820,818 840,802 870,785 900,765 933,735 950,712 975,690 1000,660'),
    c('20,890 55,850 95,783 120,747 165,657 200,588 240,507 260,480 285,415 310,370 330,342 345,330 370,307 395,283 415,262 440,253 460,240 480,230 500,215 520,210 550,206 575,212 620,213 650,227 670,231 695,243 725,246 755,254 780,259 840,267 870,262 900,257 930,250 975,241 1005,233 1040,224 1075,222 1100,218 1115,216')) },
  // 5 bars
  { color: '#000', width: 2, points: join(3,
    a('245,838 257,793 270,775 285,738 298,745 313,782 325,785 340,770 368,742 395,697 410,690 436,690 450,675 463,655 477,615 490,550 505,505 519,470 533,458 546,453 560,472 574,515 588,585 601,591 615,575 629,530 643,450 657,360 671,335 685,315 697,312 712,328 726,345 740,347 754,364 767,364 781,345 795,315 809,303 822,312 836,337 850,368 864,395 878,428 891,390 905,360 919,300 933,355 947,430 960,495 974,590 988,668 1003,620 1015,525 1029,420 1043,310 1057,225 1070,178 1084,178 1098,190 1112,180 1126,150 1140,123 1160,108 1175,90 1190,80 1205,82 1222,66 1237,63 1250,92 1264,108 1280,125 1295,155 1306,185 1319,210 1333,265 1347,320 1361,350 1375,377 1386,382 1402,370 1420,358 1440,340'),
    b('258,575 272,560 285,560 300,570 312,590 326,603 345,602 354,600 368,570 381,520 395,490 412,478 424,461 437,485 450,505 464,530 478,550 492,580 506,605 519,625 533,660 547,715 561,770 575,825 588,845 602,858 616,861 632,860 645,852 658,857 672,846 688,846 702,830 720,805 740,785 754,780 768,784 785,787 800,795 812,795 823,785 837,765 851,727 864,710 878,685 892,672 906,662 920,650 933,638 947,600 961,570 975,540 988,515 1002,490 1012,498 1030,500 1044,497 1058,501 1072,500 1085,465 1099,395 1113,340 1127,290 1140,245 1154,210 1168,200 1182,155'),
    c('178,385 190,360 203,338 217,322 231,310 245,295 259,265 272,235 286,218 300,212 313,212 327,235 341,272 360,271 382,263 396,240 410,210 430,218 445,228 466,215 480,205 493,180 507,155 521,152 540,150 552,162 565,182 576,197 590,225 604,250 618,275 631,297 645,321 660,319 700,318 714,300 728,290 741,278 755,250 769,222 783,208 798,203 810,205 824,218 838,226 851,230 865,237 885,250 900,250 913,253 925,263 940,264 962,263 975,260 990,256 1003,232 1017,200 1030,172 1044,155 1058,149 1070,154 1085,175 1099,188 1114,200')) },
  // trend lines of the flag
  { color: '#000', width: 2, points: '711,492 908,113' },
  { color: '#000', width: 2, points: '903,113 1111,170' },
  { color: '#000', width: 2, points: '853,236 1111,176' },
]

const bars = [
  3, 4, 6, 6, 6, 4, 2, 1, 1, 0, 0, -2, -2, -1, 0, 1, 5, 8, 9, 8, 7, 6, 4, 2, 1, 1, 1, 1, 1, 0,
  0, 0, 0, 2, 4, 4, 5, 5, 4, 3, 2, -3, -7, -5, -3, 0, 2, 2, 3, 4, 5, 4, 1, -1, -1, -1, -1, -1, -2, -3,
  -4, -4, -6, -6, -3, -1, 2, -6, -9, -9, -10, -10, -8, 0, 5, 9, 11, 12, 11, 10, 10, 8, 7, 6, 5, 4, 3, 2, 2, 1,
  -1, -3, -4, -5, -7, -8, -10, -10, -10, -9, -7, -6, -3, -1, 0, 1, 2, 2, 2, 0, 0, 1, 1, 3, 5, 5, 4, 5, 4, 3,
  2, 1, -2, -3, -4, -6, -7, -8, -9, -8, -7, -5, -3, -1, 0, 0, 2, 4, 4, 5, 5, 5, 5, 4, 4, 3, 4, 5, 6, 7,
  6, 6, 6, 6, 6, 6, 6, 7, 7, 7, 4, 3, 2, 2, 2, 2, 5, 7, 7, 7, 7, 7, 8, 6, 5, 5, 4, 3, 2, 2,
  2, 1, 0, -1, -4, -6, -4, -4, -3, -3, -3, -3, -3, -3, -3, -1, 0, 0, 0, 0, -1, -3, -4, -6, -7, -7, -7, -7, -5, -4,
  -4, -2, -1, 0, 1, 3, 3, 3, 3, 3, 2, 1, 1, 0, 0, 0, 0, 0, 0, 0, 0, 0, 1, 3, 4, 4, 3, 3, 2, 1, 1, 0,
]
const histogram = bars.map((h, i) => {
  const x = barX(i - 16)
  const w = barX(i - 15) - x - 1
  return h > 0 ? `M${x - 1} ${36 - h}h${w}v${h}h-${w}z` : h < 0 ? `M${x - 1} 37h${w}v${-h}h-${w}z` : ''
}).join('')

const macd = {
  line: join(2.45,
    [0, -17, '0,137 20,132 50,118 75,123 100,125 130,136 160,135 180,130 195,110 210,102 270,102 300,100 380,98 400,92 430,86 450,87 465,98 478,115 495,114 510,103 540,95 560,88 575,88 590,97 650,101 665,107 690,125 715,136 730,128 750,121 765,150 780,172 800,183 820,182 830,165 850,145 870,128 895,118 920,105 935,99 1010,101 1040,112 1060,122 1075,140 1095,162 1120,175 1150,178 1185,176 1210,170 1250,175 1280,167 1300,153 1330,149 1360,155 1385,165 1400,170 1420,187 1440,200 1465,210'],
    [600, -17, '0,211 50,211 60,205 100,188 130,185 185,172 215,158 240,152 270,138 295,128 325,115 350,121 390,117 410,98 440,88 480,68 560,62 590,65 620,88 660,92 700,103 780,106 800,116 830,135 865,156 915,161 950,155 990,146 1040,153 1110,157 1155,155 1180,142 1225,143 1250,149']),
  signal: join(2.45,
    [0, -17, '0,149 40,137 75,128 120,125 170,131 205,130 225,123 270,106 300,101 375,101 430,95 470,91 500,96 540,98 590,95 650,97 690,107 740,120 770,130 800,145 835,160 860,163 890,155 920,135 950,115 985,103 1020,100 1065,107 1100,128 1130,148 1165,171 1210,175 1260,173 1300,166 1340,157 1370,154 1410,156 1440,175 1465,188'],
    [600, -17, '0,190 30,202 60,208 95,209 130,200 180,187 240,170 285,150 340,128 400,119 440,106 490,86 530,72 570,64 615,66 680,84 720,96 800,107 850,122 890,141 930,156 975,158 1040,150 1070,148 1120,154 1180,152 1225,147 1250,146']),
}

const rsi = join(2.45,
  [0, -84, '0,372 15,370 25,362 52,360 60,376 100,372 130,386 145,380 160,368 178,358 188,334 202,333 208,352 222,370 230,360 240,356 252,369 270,367 290,354 308,356 322,354 335,361 358,356 375,345 400,331 415,338 430,341 440,348 458,355 468,396 478,402 492,367 505,351 553,350 560,344 572,358 583,375 598,368 615,363 625,358 632,364 640,359 648,364 658,360 668,378 690,391 715,390 728,357 740,361 751,358 763,418 785,402 800,406 818,398 832,365 845,362 855,371 875,367 920,365 928,359 940,368 965,364 1010,363 1018,383 1050,382 1065,395 1088,413 1105,405 1130,407 1150,400 1170,390 1195,386 1220,398 1243,404 1256,384 1270,386 1280,369 1305,371 1325,377 1340,397 1365,392 1385,410 1405,413 1415,432 1430,435 1450,444 1462,420'],
  [600, -84, '0,428 10,416 68,413 82,393 92,398 102,391 115,401 128,401 138,392 148,401 160,393 172,396 182,390 195,370 213,369 228,380 240,374 252,362 275,357 285,350 305,346 330,342 340,372 352,368 362,356 380,358 390,348 407,326 420,336 443,334 455,326 465,325 475,317 492,330 520,324 540,320 570,315 582,328 598,331 610,362 622,371 635,345 675,351 690,358 700,365 712,354 725,354 733,345 745,353 762,357 785,361 800,374 815,391 832,402 855,400 868,413 880,390 895,392 910,400 920,388 945,370 970,366 993,367 1010,384 1030,386 1045,380 1060,391 1073,399 1085,391 1105,391 1120,387 1135,390 1150,382 1162,350 1175,344 1185,357 1198,360 1208,380 1218,375 1230,390 1240,382 1252,381'])

const stoch = {
  k: join(2.45,
    [0, -184, '0,640 8,628 20,640 35,605 50,583 62,605 75,625 88,648 105,655 120,700 132,740 142,757 155,725 165,680 178,625 188,596 200,592 210,605 232,657 250,658 278,677 290,658 325,634 358,648 368,635 380,590 390,573 410,590 430,620 450,632 460,665 470,710 480,738 492,722 503,660 515,592 530,592 560,590 572,584 585,610 600,645 617,665 640,655 650,635 660,636 675,660 695,740 705,745 716,763 728,710 740,640 751,595 765,655 775,680 785,710 798,697 820,697 835,640 850,585 870,590 888,600 920,587 935,605 950,655 964,674 985,657 1010,656 1025,710 1042,750 1055,738 1070,770 1088,800 1110,778 1130,770 1150,752 1165,725 1185,650 1200,608 1212,620 1225,680 1246,728 1262,700 1280,635 1300,622 1325,635 1345,690 1370,755 1390,786 1430,786 1450,802'],
    [600, -184, '0,775 12,752 25,750 50,728 65,690 80,630 90,612 102,608 125,650 148,665 160,650 170,663 185,650 205,605 217,590 225,608 245,616 262,597 310,586 330,590 345,645 362,655 375,635 395,625 408,590 430,590 443,597 475,571 490,585 510,590 530,574 550,577 575,590 595,620 610,675 622,700 635,680 655,600 675,597 700,621 720,607 733,580 745,605 765,650 785,660 800,690 815,740 835,770 868,782 885,745 905,712 915,715 930,690 940,640 950,590 965,580 985,587 1005,605 1025,660 1050,700 1062,735 1073,773 1090,762 1105,718 1120,718 1135,690 1150,660 1165,620 1178,613 1190,622 1208,668 1218,675 1230,707 1245,705 1252,709']),
  d: join(2.45,
    [0, -184, '0,672 10,650 25,635 45,610 62,598 75,610 90,637 110,658 125,690 140,730 152,740 165,715 180,655 195,612 208,598 222,612 240,640 262,658 290,668 305,652 325,640 345,638 358,645 370,632 385,600 400,580 412,583 430,602 455,628 468,662 480,705 492,722 505,700 515,665 525,610 535,593 582,592 600,620 625,660 650,646 665,640 685,675 705,730 717,755 730,730 742,680 755,640 763,632 775,650 790,695 810,703 825,692 840,660 855,610 865,590 890,597 928,597 945,615 960,645 975,668 1000,658 1015,660 1030,690 1055,738 1075,752 1090,780 1100,795 1130,775 1150,762 1168,740 1185,700 1200,640 1212,618 1225,635 1240,680 1255,712 1270,695 1290,640 1305,624 1330,632 1350,665 1375,730 1400,775 1415,786 1445,792 1460,797'],
    [600, -184, '0,787 15,770 35,748 60,720 80,670 95,625 107,616 130,640 150,658 175,660 195,648 210,620 228,600 255,612 275,602 300,590 330,591 350,625 372,650 395,637 415,600 430,591 455,592 480,577 510,585 540,576 570,583 600,615 620,665 635,685 650,660 665,618 680,598 705,612 725,612 740,597 757,597 775,630 800,672 820,725 840,763 865,778 885,765 905,735 925,715 945,665 960,605 978,582 1000,592 1020,620 1045,670 1070,725 1087,763 1100,760 1115,730 1140,690 1165,645 1185,617 1200,630 1220,668 1240,695 1252,704']),
}
</script>

<style scoped>
.station { position: relative; display: flex; flex-direction: column; height: 100vh; overflow: hidden; background: #fff; font-family: "DejaVu Sans", Verdana, sans-serif; font-size: 11px; }
button { padding: 0; border: 0; background: none; font: inherit; color: inherit; cursor: pointer; }
svg { display: block; }

.topbar { flex: none; height: 39px; background: #f0eff5; }
.toolbar { display: inline-flex; align-items: center; height: 33px; padding-left: 4px; padding-bottom: 1px; background: linear-gradient(#fdfdfe, #ececf2 55%, #c2c2d2); border-bottom: 2px solid #a09fb8; }
.grip { width: 6px; height: 9px; margin-right: 8px; background: repeating-linear-gradient(90deg, #d4d4e0 0 1px, #fff 1px 2px); }
.picker { position: relative; height: 19px; background: #fff; }
.picker select { width: 100%; height: 19px; padding: 0 3px; border: 0; appearance: none; background: #fff; color: #111; font: 12px/19px "Open Sans", "Noto Sans", sans-serif; }
.picker.symbol { width: 81px; margin-right: 4px; }
.picker.period { width: 90px; margin: 0 3px 0 2px; }
.arrow { position: absolute; right: 3px; top: 8px; border: 4px solid transparent; border-top-color: #000; border-bottom: 0; pointer-events: none; }
.tool { display: flex; justify-content: center; width: 35px; height: 31px; }
.tool.active { width: 33px; margin: 0 1px; box-sizing: border-box; background: linear-gradient(#fdb46c, #ff9640 60%, #ffb050); border: 1px solid #8c7040; }
.tool.active .icon { margin-top: -1px; }
.icon { width: 26px; height: 31px; flex: none; }
.word { height: 15px; margin-top: 8px; font-size: 10px; line-height: 12px; color: #000; border-bottom: 2px solid #1e88e8; }
.active .word { margin-top: 7px; }
.word.ask { border-color: #f46038; }
.side { align-items: flex-start; }
.caret { width: 11px; height: 31px; display: flex; align-items: center; justify-content: center; }
.caret::before { content: ""; border: 3px solid transparent; border-top-color: #9a9ab4; border-bottom: 0; }
.sep { width: 1px; height: 31px; margin: 0 2px; background: #cfcfda; border-right: 1px solid #fff; }
.more { width: 15px; height: 31px; display: flex; align-items: center; justify-content: center; }

.main-pane { flex: none; display: grid; grid-template-columns: minmax(0, 1fr) 71px; grid-template-rows: 31px auto 38px; }
.main-pane .scale { grid-column: 2; grid-row: 1 / 4; }
.top-axis { grid-column: 1; grid-row: 1; width: 100%; }
.bottom-axis { grid-column: 1; grid-row: 3; width: 100%; overflow: visible; }
.scale { overflow: visible; }
.plot { position: relative; grid-column: 1; border: 1px solid #c2cddb; border-left: 0; box-shadow: 0 0 0 1px #e4e6ee; }
.canvas { width: 100%; overflow: hidden; }
.crisp { shape-rendering: crispEdges; }
.curve { fill: none; }
.axis { fill: none; stroke: #484848; shape-rendering: crispEdges; }
.axis-label { fill: #34346c; font-size: 11px; }
.level { fill: #000; font-size: 11px; }

.sub-pane { flex: none; display: grid; grid-template-columns: minmax(0, 1fr) 71px; border-top: 4px solid #c2cddb; }
.sub-pane .plot { margin: 3px 0 2px; }
.sub-pane .scale { grid-column: 2; grid-row: 1; }
.sub-pane.rsi .plot { margin-bottom: 1px; }
.sub-pane .legend { top: 0; }

.legend { position: absolute; left: 8px; margin: 0; padding: 0; list-style: none; font-size: 12px; line-height: 13px; white-space: nowrap; display: flex; gap: 8px; }
.main-legend { top: 37px; flex-direction: column; gap: 0; }
.main-legend li { display: flex; gap: 8px; }
.navy { color: #40407c; }
.green { color: #008000; }
.blue { color: #0000ff; }
.red { color: #ff0000; }
.black { color: #000; }
.rust { color: #d84808; }
.orange { color: #ff8400; }

.quote { position: absolute; left: 9px; top: 5px; display: flex; align-items: center; gap: 7px; height: 30px; padding: 0 1px; background: rgba(228, 228, 231, .9); }
.deal { display: flex; align-items: baseline; gap: 7px; height: 30px; color: #000; }
.deal-side { color: #34346c; font-size: 15px; line-height: 30px; }
.small { font: 12px/14px "Open Sans", "Noto Sans", sans-serif; }
.big { font: bold 21px/26px "DejaVu Sans Mono", monospace; }
.pip { align-self: flex-start; padding-top: 3px; font: 600 12px/14px "Open Sans", "Noto Sans", sans-serif; }
.lots { position: relative; width: 50px; height: 20px; }
.lots select { width: 50px; height: 20px; padding: 0 2px; border: 1px solid #e0e0e0; background: #fff; appearance: none; color: #c8c8c0; font: 12px/16px "Open Sans", "Noto Sans", sans-serif; }
.lots .arrow { border-width: 3px 3px 0; border-top-color: #d0d0d0; top: 9px; }

.position { position: absolute; left: 19px; display: flex; height: 18px; line-height: 18px; box-shadow: 1px 2px 0 #d8d8d8; }
.position i { width: 10px; background: #4040c0; }
.position span { padding: 0 7px; }
.long { top: 135px; }
.long span { background: linear-gradient(#cbe8a0, #a2c07c); color: #1c4410; }
.stop { top: 178px; }
.stop span { background: linear-gradient(#ff4464, #f42848); color: #640010; padding: 0 5px; }
.stop-shadow { top: 184px; width: 46px; background: #dcdcdc; box-shadow: none; }
.stop-shadow i { background: #3c8040; }
.pins { position: absolute; left: 14px; top: 151px; }

.note { position: absolute; height: 18px; padding: 0 5px; background: linear-gradient(#eeeeee, #b8b8b8); color: #000; font-size: 16px; font-weight: bold; line-height: 18px; white-space: nowrap; }
.wave-one { left: 407px; top: 177px; padding: 0 4px; }
.wave-two { left: 605px; top: 513px; padding: 0 4px; }
.flag { left: 1097px; top: 190px; padding: 0 3px; background: linear-gradient(#ffff99, #c8c880); }
.rsi-note { left: 1147px; top: 25px; border: 1px solid #202020; }
.buy-note { left: 1111px; top: 63px; }

.watermark { position: absolute; right: 76px; bottom: 11px; width: 236px; color: #c0c0c0; font-family: "Open Sans", "Noto Sans", sans-serif; white-space: nowrap; pointer-events: none; }
.watermark strong { display: block; font-size: 19px; font-weight: normal; line-height: 24px; }
.watermark span { display: block; font-size: 14px; line-height: 20px; }
</style>

<style>
body { overflow: hidden; }
</style>
